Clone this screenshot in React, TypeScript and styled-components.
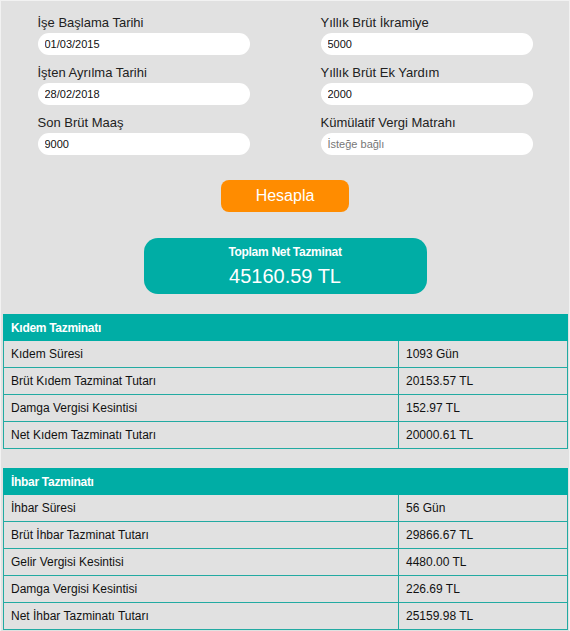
import React from "react";
import styled, { createGlobalStyle } from "styled-components";

const Global = createGlobalStyle`
  html, body { margin: 0; padding: 0; background: #f2f2f2; }
  body { font-family: "Liberation Sans", Arial, sans-serif; }
  * { box-sizing: border-box; }
`;

const Page = styled.div`
  margin: 1px 1px 0 1px;
  width: 568px;
  background: #e1e1e1;
  padding: 13px 0 2px 0;
  display: flex;
  flex-direction: column;
  align-items: center;
`;

const Form = styled.div`
  width: 495px;
  display: grid;
  grid-template-columns: 212px 212px;
  column-gap: 71px;
  row-gap: 9px;
`;

const Field = styled.div`
  display: flex;
  flex-direction: column;
`;

const Label = styled.label`
  font-size: 13px;
  line-height: 16px;
  padding-top: 1px;
  color: #222;
  margin-bottom: 2px;
`;

const Input = styled.input`
  height: 22px;
  border: none;
  border-radius: 11px;
  background: #fff;
  padding: 0 7px;
  font-family: "Liberation Sans", Arial, sans-serif;
  font-size: 11px;
  color: #111;
  outline: none;
  &::placeholder { color: #777; }
`;

const Button = styled.button`
  margin-top: 25px;
  width: 128px;
  height: 32px;
  border: none;
  border-radius: 8px;
  background: #ff8c00;
  color: #fff;
  font-family: "Liberation Sans", Arial, sans-serif;
  font-size: 16px;
`;

const Result = styled.div`
  margin-top: 26px;
  width: 283px;
  height: 56px;
  border-radius: 14px;
  background: #00ada5;
  color: #fff;
  display: flex;
  flex-direction: column;
  align-items: center;
  padding-top: 7px;
`;

const ResultTitle = styled.div`
  font-size: 12px;
  line-height: 14px;
  font-weight: bold;
  letter-spacing: -0.3px;
`;

const ResultValue = styled.div`
  margin-top: 4px;
  font-size: 20px;
  line-height: 26px;
`;

const Table = styled.table<{ $mt: number }>`
  margin-top: ${(p) => p.$mt}px;
  width: 565px;
  margin-left: 1px;
  border-collapse: collapse;
  font-size: 12px;
  color: #111;
`;

const HeadCell = styled.th`
  background: #00ada5;
  color: #fff;
  text-align: left;
  font-weight: bold;
  height: 26px;
  padding: 0 7px;
  letter-spacing: -0.3px;
  border: 1px solid #00ada5;
`;

const Cell = styled.td<{ $w?: number }>`
  border: 1px solid #22aaa2;
  height: 27px;
  padding: 0 7px;
  ${(p) => (p.$w ? `width: ${p.$w}px;` : "")}
`;

type Row = [string, string];

const kidem: Row[] = [
  ["Kıdem Süresi", "1093 Gün"],
  ["Brüt Kıdem Tazminat Tutarı", "20153.57 TL"],
  ["Damga Vergisi Kesintisi", "152.97 TL"],
  ["Net Kıdem Tazminatı Tutarı", "20000.61 TL"],
];

const ihbar: Row[] = [
  ["İhbar Süresi", "56 Gün"],
  ["Brüt İhbar Tazminat Tutarı", "29866.67 TL"],
  ["Gelir Vergisi Kesintisi", "4480.00 TL"],
  ["Damga Vergisi Kesintisi", "226.69 TL"],
  ["Net İhbar Tazminatı Tutarı", "25159.98 TL"],
];

function ResultTable({ title, rows, mt }: { title: string; rows: Row[]; mt: number }) {
  return (
    <Table $mt={mt}>
      <thead>
        <tr>
          <HeadCell colSpan={2}>{title}</HeadCell>
        </tr>
      </thead>
      <tbody>
        {rows.map(([k, v]) => (
          <tr key={k}>
            <Cell>{k}</Cell>
            <Cell $w={169}>{v}</Cell>
          </tr>
        ))}
      </tbody>
    </Table>
  );
}

export default function App() {
  return (
    <>
      <Global />
      <Page>
        <Form>
          <Field>
            <Label>İşe Başlama Tarihi</Label>
            <Input defaultValue="01/03/2015" />
          </Field>
          <Field>
            <Label>Yıllık Brüt İkramiye</Label>
            <Input defaultValue="5000" />
          </Field>
          <Field>
            <Label>İşten Ayrılma Tarihi</Label>
            <Input defaultValue="28/02/2018" />
          </Field>
          <Field>
            <Label>Yıllık Brüt Ek Yardım</Label>
            <Input defaultValue="2000" />
          </Field>
          <Field>
            <Label>Son Brüt Maaş</Label>
            <Input defaultValue="9000" />
          </Field>
          <Field>
            <Label>Kümülatif Vergi Matrahı</Label>
            <Input placeholder="İsteğe bağlı" />
          </Field>
        </Form>
        <Button>Hesapla</Button>
        <Result>
          <ResultTitle>Toplam Net Tazminat</ResultTitle>
          <ResultValue>45160.59 TL</ResultValue>
        </Result>
        <ResultTable title="Kıdem Tazminatı" rows={kidem} mt={20} />
        <ResultTable title="İhbar Tazminatı" rows={ihbar} mt={19} />
      </Page>
    </>
  );
}
